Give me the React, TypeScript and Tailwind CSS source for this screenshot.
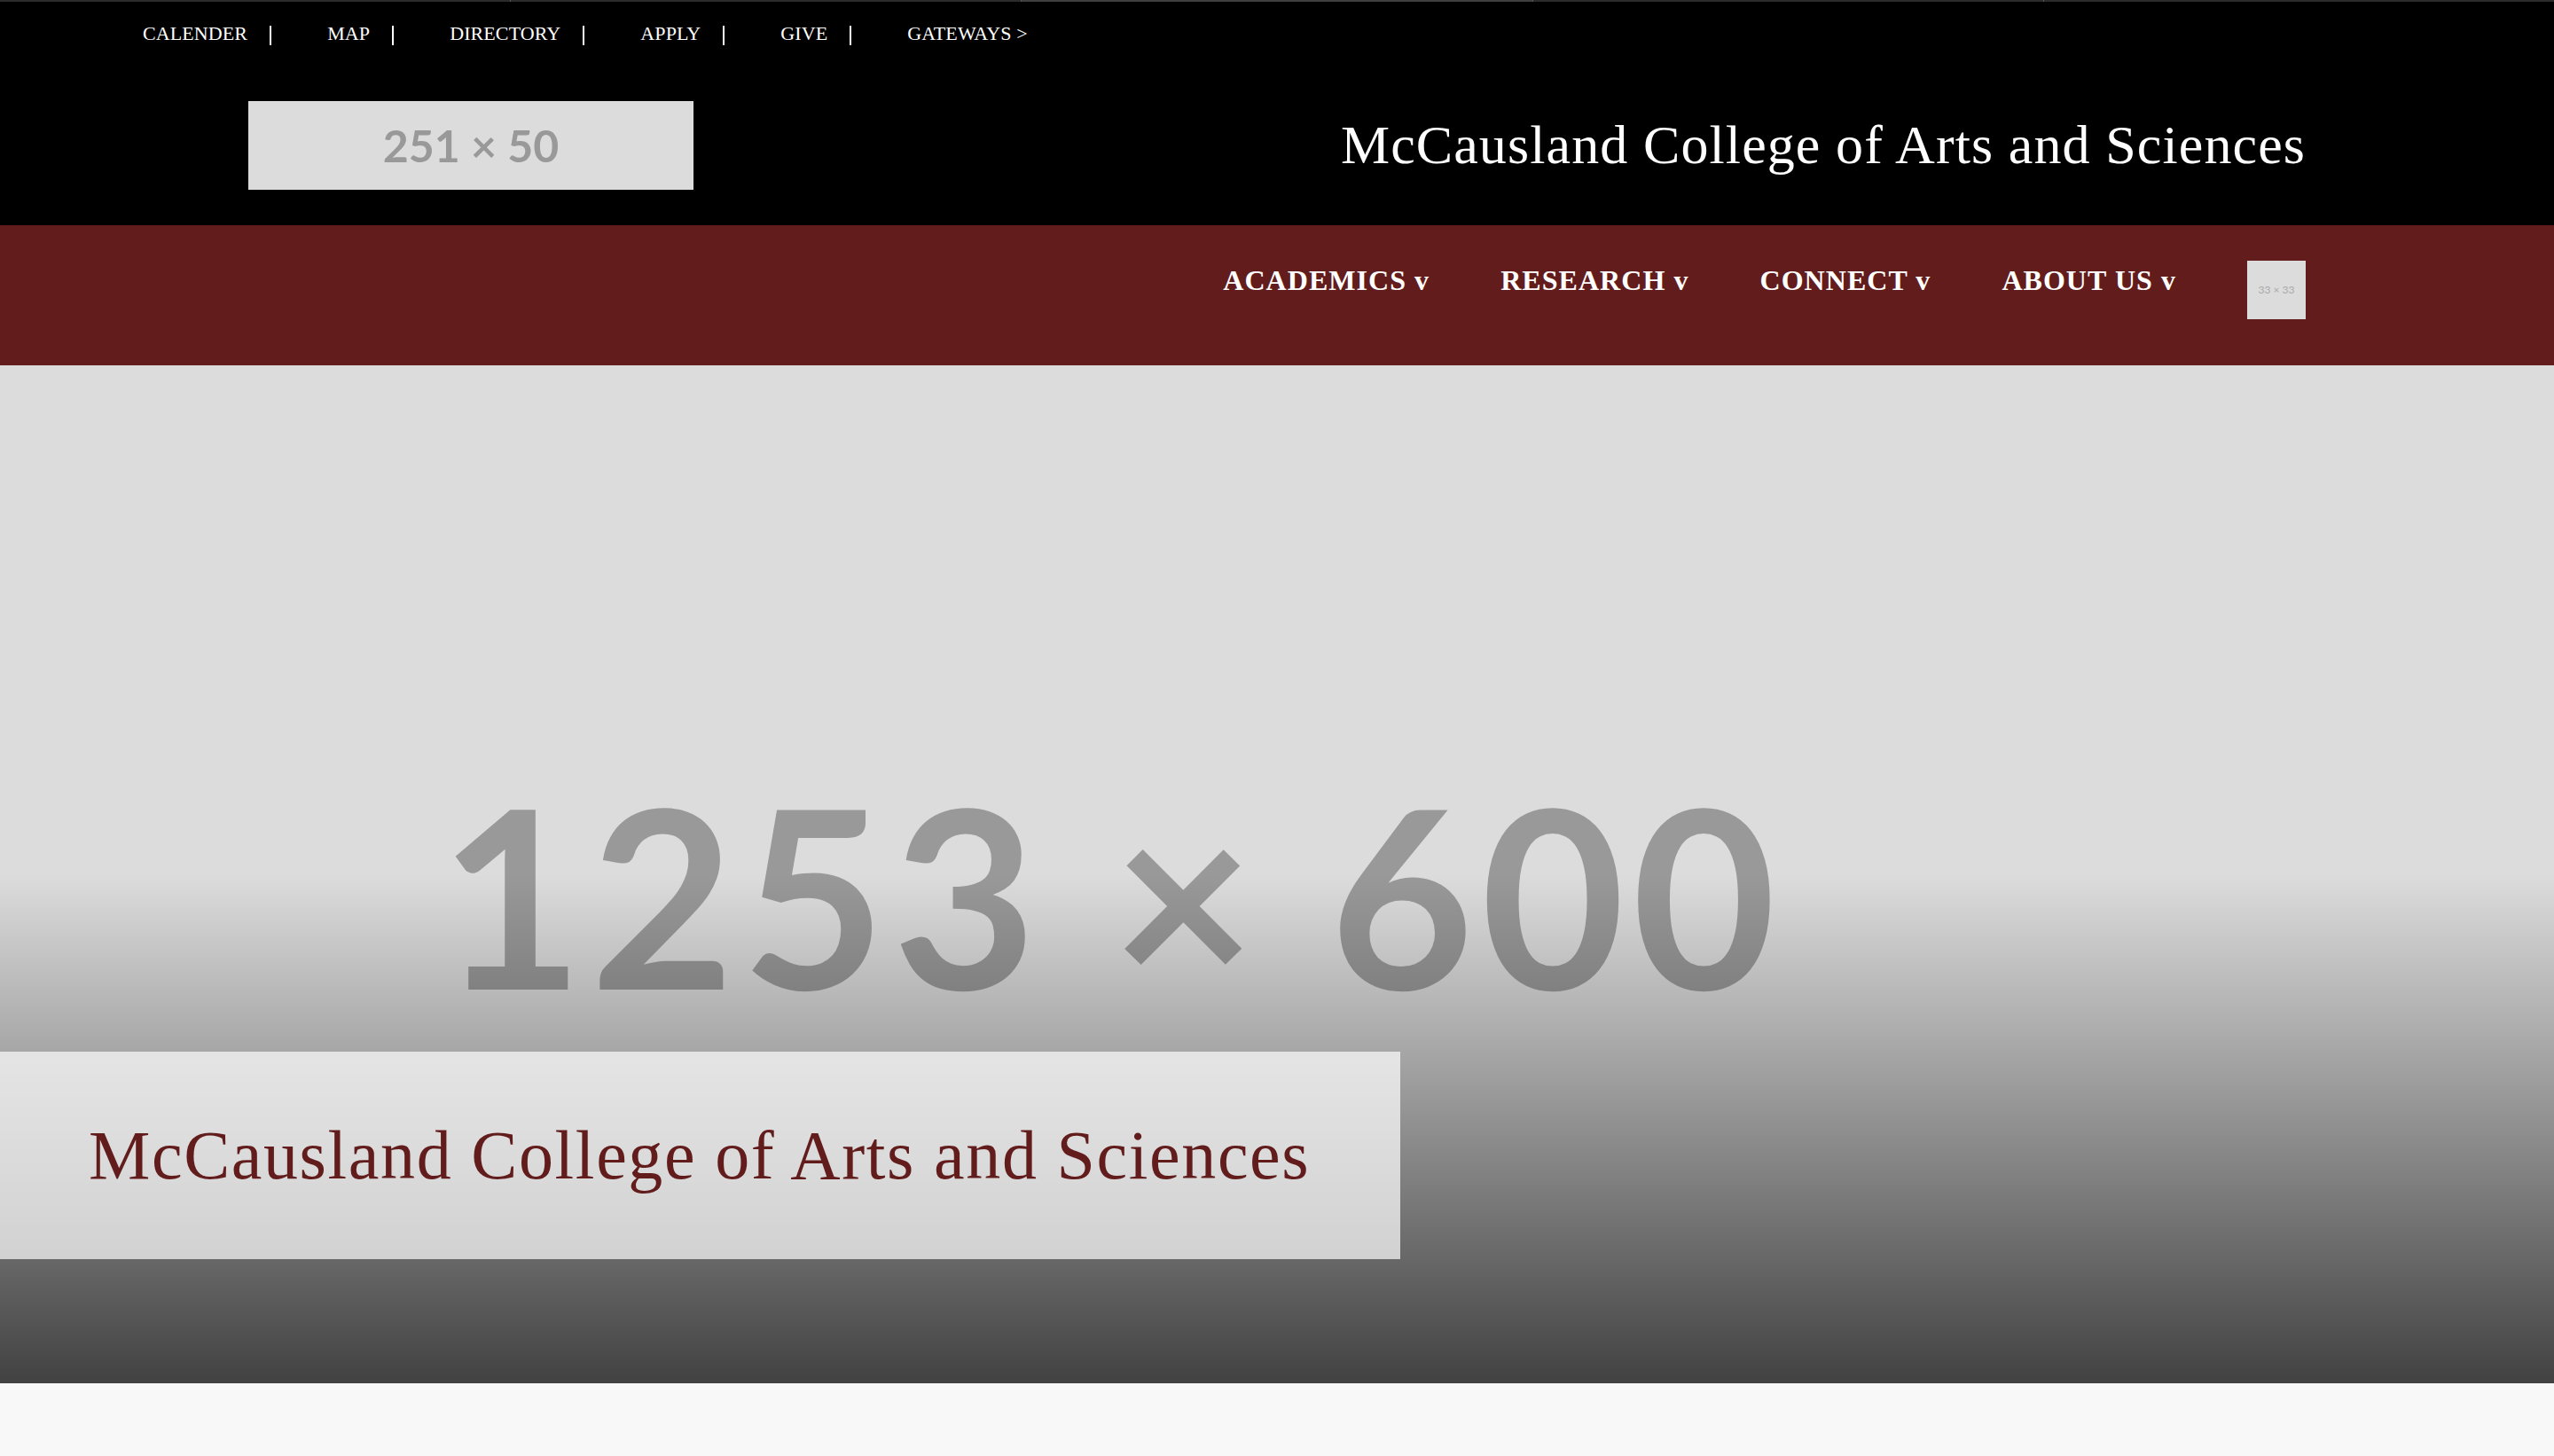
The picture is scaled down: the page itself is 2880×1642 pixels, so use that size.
const serif = { fontFamily: '"Liberation Serif", "Times New Roman", serif' }
const lato = { fontFamily: 'Lato, "Open Sans", sans-serif' }

const utilityLinks = ["CALENDER", "MAP", "DIRECTORY", "APPLY", "GIVE"]
const navLinks = ["ACADEMICS v", "RESEARCH v", "CONNECT v", "ABOUT US v"]

const TopStripe = () => {
	return (
		<div className="flex h-[2px] w-full">
			<div className="flex-1 bg-[#2b2b2b] border-r border-[#555]" />
			<div className="flex-1 bg-[#2b2b2b] border-r border-[#555]" />
			<div className="flex-1 bg-[#404040] border-r border-[#555]" />
			<div className="flex-1 bg-[#2b2b2b] border-r border-[#555]" />
			<div className="flex-1 bg-[#2b2b2b]" />
		</div>
	)
}

const Header = () => {
	return (
		<header className="bg-black text-white h-[254px]" style={serif}>
			<TopStripe />
			<nav className="flex items-center pl-[161px] pt-[23px] text-[22px] leading-[22px] tracking-[0.1px]">
				{utilityLinks.map((label) => (
					<div key={label} className="flex items-center mr-[63px]">
						<a href="#" className="pr-[25px]">
							{label}
						</a>
						<span className="w-[2px] h-[22px] bg-white mt-[4px]" />
					</div>
				))}
				<a href="#">GATEWAYS &gt;</a>
			</nav>

			<div className="flex items-center justify-between px-[280px] mt-[63px]">
				<div
					className="w-[502px] h-[100px] bg-[#dcdcdc] text-[#999] flex items-center justify-center text-[50px] font-bold"
					style={lato}
				>
					251 × 50
				</div>
				<h1 className="text-[62px] leading-none tracking-[1.1px] whitespace-nowrap -mt-[2px]">
					McCausland College of Arts and Sciences
				</h1>
			</div>
		</header>
	)
}

const MainNav = () => {
	return (
		<div className="bg-[#621c1c] h-[158px] flex justify-end items-start pt-[40px] pr-[280px]" style={serif}>
			<div className="flex items-start gap-[80px]">
				{navLinks.map((label) => (
					<a
						key={label}
						href="#"
						className="text-white font-bold text-[32px] leading-none tracking-[1.05px] pt-[6px] whitespace-nowrap"
					>
						{label}
					</a>
				))}
				<div
					className="w-[66px] h-[66px] bg-[#dcdcdc] text-[#aaa] text-[12px] flex items-center justify-center"
					style={lato}
				>
					33 × 33
				</div>
			</div>
		</div>
	)
}

const Hero = () => {
	return (
		<section className="relative h-[1148px] overflow-hidden bg-[#dcdcdc]">
			<div
				className="w-[2506px] h-[1200px] pb-[9px] flex items-center justify-center text-[#999] text-[280px] font-bold leading-none tracking-[8px]"
				style={lato}
			>
				1253 × 600
			</div>
			<div className="absolute inset-0 bg-[linear-gradient(to_bottom,transparent_50%,rgba(0,0,0,0.7))]" />
			<div className="absolute left-0 bottom-[140px] w-[1579px] h-[234px] bg-white/70 flex items-center pl-[100px]">
				<h2 className="text-[#621c1c] text-[78px] leading-none tracking-[1.6px] whitespace-nowrap" style={serif}>
					McCausland College of Arts and Sciences
				</h2>
			</div>
		</section>
	)
}

export default function App() {
	return (
		<div className="min-h-screen bg-[#f8f8f8]">
			<Header />
			<MainNav />
			<Hero />
		</div>
	)
}
